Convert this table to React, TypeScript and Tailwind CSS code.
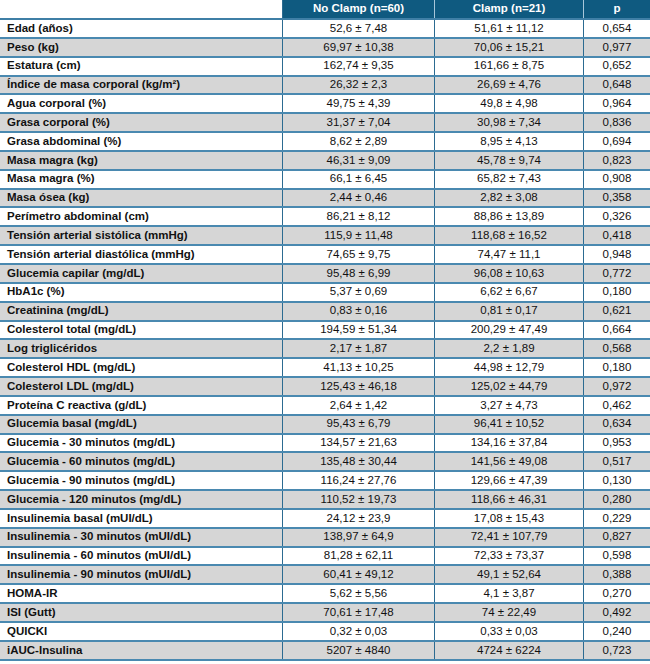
import React from 'react';

type Row = [string, string, string, string];

const rows: Row[] = [
  ['Edad (años)', '52,6 ± 7,48', '51,61 ± 11,12', '0,654'],
  ['Peso (kg)', '69,97 ± 10,38', '70,06 ± 15,21', '0,977'],
  ['Estatura (cm)', '162,74 ± 9,35', '161,66 ± 8,75', '0,652'],
  ['Índice de masa corporal (kg/m²)', '26,32 ± 2,3', '26,69 ± 4,76', '0,648'],
  ['Agua corporal (%)', '49,75 ± 4,39', '49,8 ± 4,98', '0,964'],
  ['Grasa corporal (%)', '31,37 ± 7,04', '30,98 ± 7,34', '0,836'],
  ['Grasa abdominal (%)', '8,62 ± 2,89', '8,95 ± 4,13', '0,694'],
  ['Masa magra (kg)', '46,31 ± 9,09', '45,78 ± 9,74', '0,823'],
  ['Masa magra (%)', '66,1 ± 6,45', '65,82 ± 7,43', '0,908'],
  ['Masa ósea (kg)', '2,44 ± 0,46', '2,82 ± 3,08', '0,358'],
  ['Perímetro abdominal (cm)', '86,21 ± 8,12', '88,86 ± 13,89', '0,326'],
  ['Tensión arterial sistólica (mmHg)', '115,9 ± 11,48', '118,68 ± 16,52', '0,418'],
  ['Tensión arterial diastólica (mmHg)', '74,65 ± 9,75', '74,47 ± 11,1', '0,948'],
  ['Glucemia capilar (mg/dL)', '95,48 ± 6,99', '96,08 ± 10,63', '0,772'],
  ['HbA1c (%)', '5,37 ± 0,69', '6,62 ± 6,67', '0,180'],
  ['Creatinina (mg/dL)', '0,83 ± 0,16', '0,81 ± 0,17', '0,621'],
  ['Colesterol total (mg/dL)', '194,59 ± 51,34', '200,29 ± 47,49', '0,664'],
  ['Log triglicéridos', '2,17 ± 1,87', '2,2 ± 1,89', '0,568'],
  ['Colesterol HDL (mg/dL)', '41,13 ± 10,25', '44,98 ± 12,79', '0,180'],
  ['Colesterol LDL (mg/dL)', '125,43 ± 46,18', '125,02 ± 44,79', '0,972'],
  ['Proteína C reactiva (g/dL)', '2,64 ± 1,42', '3,27 ± 4,73', '0,462'],
  ['Glucemia basal (mg/dL)', '95,43 ± 6,79', '96,41 ± 10,52', '0,634'],
  ['Glucemia - 30 minutos (mg/dL)', '134,57 ± 21,63', '134,16 ± 37,84', '0,953'],
  ['Glucemia - 60 minutos (mg/dL)', '135,48 ± 30,44', '141,56 ± 49,08', '0,517'],
  ['Glucemia - 90 minutos (mg/dL)', '116,24 ± 27,76', '129,66 ± 47,39', '0,130'],
  ['Glucemia - 120 minutos (mg/dL)', '110,52 ± 19,73', '118,66 ± 46,31', '0,280'],
  ['Insulinemia basal (mUI/dL)', '24,12 ± 23,9', '17,08 ± 15,43', '0,229'],
  ['Insulinemia - 30 minutos (mUI/dL)', '138,97 ± 64,9', '72,41 ± 107,79', '0,827'],
  ['Insulinemia - 60 minutos (mUI/dL)', '81,28 ± 62,11', '72,33 ± 73,37', '0,598'],
  ['Insulinemia - 90 minutos (mUI/dL)', '60,41 ± 49,12', '49,1 ± 52,64', '0,388'],
  ['HOMA-IR', '5,62 ± 5,56', '4,1 ± 3,87', '0,270'],
  ['ISI (Gutt)', '70,61 ± 17,48', '74 ± 22,49', '0,492'],
  ['QUICKI', '0,32 ± 0,03', '0,33 ± 0,03', '0,240'],
  ['iAUC-Insulina', '5207 ± 4840', '4724 ± 6224', '0,723'],
];

export default function App() {
  return (
    <div className="w-[650px] h-[664px] bg-white text-[#111] font-['Liberation_Sans',Arial,sans-serif] text-[11.5px] leading-none">
      {/* Header */}
      <div className="grid grid-cols-[283px_152px_149px_66px] h-[20px] border-b-2 border-[#3f7fa6]">
        <div className="bg-white border-r border-[#2c6b91]" />
        <div className="bg-[#0f5a80] text-white font-bold flex items-center justify-center border-r border-[#a8c7da]">No Clamp (n=60)</div>
        <div className="bg-[#0f5a80] text-white font-bold flex items-center justify-center border-r border-[#a8c7da]">Clamp (n=21)</div>
        <div className="bg-[#0f5a80] text-white font-bold flex items-center justify-center">p</div>
      </div>

      {/* Body */}
      {rows.map((r, i) => (
        <div
          key={r[0]}
          className={`grid grid-cols-[283px_152px_149px_66px] h-[18.85px] border-b-2 border-[#4a89b0] ${i % 2 === 1 ? 'bg-[#d6d6d6]' : 'bg-white'}`}
        >
          <div className="pl-[6px] font-bold flex items-center border-r border-[#2c6b91] ml-[1px]">{r[0]}</div>
          <div className="flex items-center justify-center border-r border-[#2c6b91]">{r[1]}</div>
          <div className="flex items-center justify-center border-r border-[#2c6b91]">{r[2]}</div>
          <div className="flex items-center justify-center">{r[3]}</div>
        </div>
      ))}
    </div>
  );
}
